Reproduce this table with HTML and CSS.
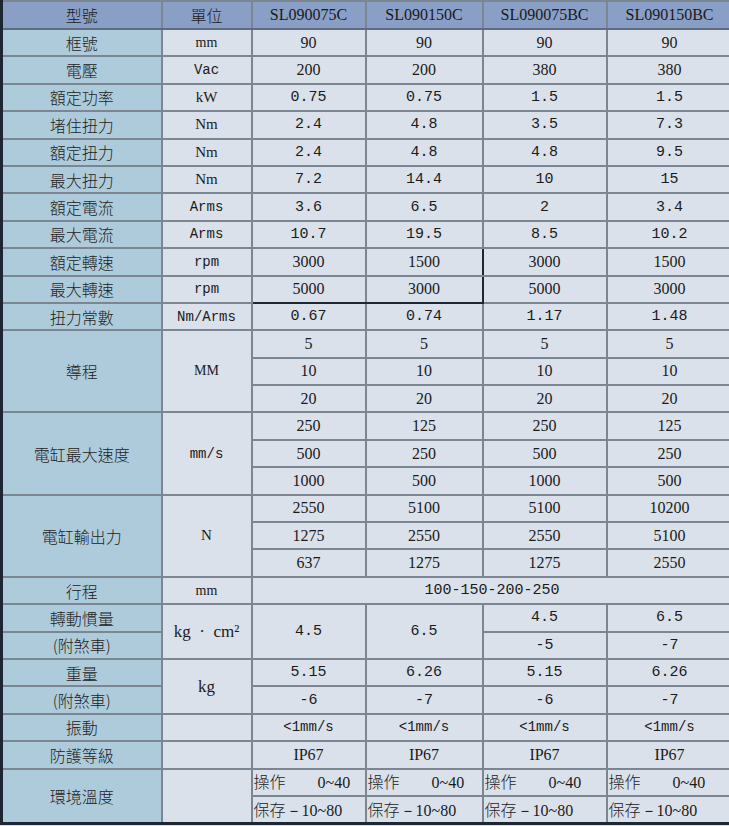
FILE: index.html
```html
<!DOCTYPE html>
<html lang="zh-Hant">
<head>
<meta charset="utf-8">
<title>規格表</title>
<link rel="stylesheet" href="styles.css">
</head>
<body>
<table class="spec">
  <colgroup>
    <col class="c1"><col class="c2"><col class="c3"><col class="c4"><col class="c5"><col class="c6">
  </colgroup>
  <thead>
    <tr class="head">
      <th class="zh">型號</th><th class="zh">單位</th>
      <th class="ser">SL090075C</th><th class="ser">SL090150C</th><th class="ser">SL090075BC</th><th class="ser">SL090150BC</th>
    </tr>
  </thead>
  <tbody>
    <tr><th>框號</th><td class="u ser sm">mm</td><td class="ser">90</td><td class="ser">90</td><td class="ser">90</td><td class="ser">90</td></tr>
    <tr><th>電壓</th><td class="u mono">Vac</td><td class="ser">200</td><td class="ser">200</td><td class="ser">380</td><td class="ser">380</td></tr>
    <tr><th>額定功率</th><td class="u ser">kW</td><td class="mono">0.75</td><td class="mono">0.75</td><td class="mono">1.5</td><td class="mono">1.5</td></tr>
    <tr><th>堵住扭力</th><td class="u ser">Nm</td><td class="mono">2.4</td><td class="mono">4.8</td><td class="mono">3.5</td><td class="mono">7.3</td></tr>
    <tr><th>額定扭力</th><td class="u ser">Nm</td><td class="mono">2.4</td><td class="mono">4.8</td><td class="mono">4.8</td><td class="mono">9.5</td></tr>
    <tr><th>最大扭力</th><td class="u ser">Nm</td><td class="mono">7.2</td><td class="mono">14.4</td><td class="mono">10</td><td class="mono">15</td></tr>
    <tr><th>額定電流</th><td class="u mono">Arms</td><td class="mono">3.6</td><td class="mono">6.5</td><td class="mono">2</td><td class="mono">3.4</td></tr>
    <tr><th>最大電流</th><td class="u mono">Arms</td><td class="mono">10.7</td><td class="mono">19.5</td><td class="mono">8.5</td><td class="mono">10.2</td></tr>
    <tr><th>額定轉速</th><td class="u mono">rpm</td><td class="ser box-tl">3000</td><td class="ser box-tr">1500</td><td class="ser">3000</td><td class="ser">1500</td></tr>
    <tr><th>最大轉速</th><td class="u mono">rpm</td><td class="ser box-bl">5000</td><td class="ser box-br">3000</td><td class="ser">5000</td><td class="ser">3000</td></tr>
    <tr><th>扭力常數</th><td class="u mono">Nm/Arms</td><td class="mono">0.67</td><td class="mono">0.74</td><td class="mono">1.17</td><td class="mono">1.48</td></tr>

    <tr><th rowspan="3">導程</th><td class="u ser sm" rowspan="3">MM</td><td class="ser">5</td><td class="ser">5</td><td class="ser">5</td><td class="ser">5</td></tr>
    <tr><td class="ser">10</td><td class="ser">10</td><td class="ser">10</td><td class="ser">10</td></tr>
    <tr><td class="ser">20</td><td class="ser">20</td><td class="ser">20</td><td class="ser">20</td></tr>

    <tr><th rowspan="3">電缸最大速度</th><td class="u mono" rowspan="3">mm/s</td><td class="ser">250</td><td class="ser">125</td><td class="ser">250</td><td class="ser">125</td></tr>
    <tr><td class="ser">500</td><td class="ser">250</td><td class="ser">500</td><td class="ser">250</td></tr>
    <tr><td class="ser">1000</td><td class="ser">500</td><td class="ser">1000</td><td class="ser">500</td></tr>

    <tr><th rowspan="3">電缸輸出力</th><td class="u ser" rowspan="3">N</td><td class="ser">2550</td><td class="ser">5100</td><td class="ser">5100</td><td class="ser">10200</td></tr>
    <tr><td class="ser">1275</td><td class="ser">2550</td><td class="ser">2550</td><td class="ser">5100</td></tr>
    <tr><td class="ser">637</td><td class="ser">1275</td><td class="ser">1275</td><td class="ser">2550</td></tr>

    <tr><th>行程</th><td class="u ser sm">mm</td><td class="mono" colspan="4">100-150-200-250</td></tr>

    <tr><th>轉動慣量</th><td class="u ser kgcm" rowspan="2">kg&nbsp;&nbsp;·&nbsp;&nbsp;cm²</td><td class="mono" rowspan="2">4.5</td><td class="mono" rowspan="2">6.5</td><td class="mono">4.5</td><td class="mono">6.5</td></tr>
    <tr><th>(附煞車)</th><td class="mono">-5</td><td class="mono">-7</td></tr>

    <tr><th>重量</th><td class="u ser kgcm" rowspan="2">kg</td><td class="mono">5.15</td><td class="mono">6.26</td><td class="mono">5.15</td><td class="mono">6.26</td></tr>
    <tr><th>(附煞車)</th><td class="mono">-6</td><td class="mono">-7</td><td class="mono">-6</td><td class="mono">-7</td></tr>

    <tr><th>振動</th><td class="u"></td><td class="mono vib">&lt;1mm/s</td><td class="mono vib">&lt;1mm/s</td><td class="mono vib">&lt;1mm/s</td><td class="mono vib">&lt;1mm/s</td></tr>
    <tr><th>防護等級</th><td class="u"></td><td class="ser">IP67</td><td class="ser">IP67</td><td class="ser">IP67</td><td class="ser">IP67</td></tr>

    <tr><th rowspan="2">環境溫度</th><td class="u" rowspan="2"></td>
      <td class="env"><span class="zh">操作</span><span class="ser gap">0~40</span></td>
      <td class="env"><span class="zh">操作</span><span class="ser gap">0~40</span></td>
      <td class="env"><span class="zh">操作</span><span class="ser gap">0~40</span></td>
      <td class="env"><span class="zh">操作</span><span class="ser gap">0~40</span></td></tr>
    <tr class="last">
      <td class="env"><span class="zh">保存</span><span class="ser">－10~80</span></td>
      <td class="env"><span class="zh">保存</span><span class="ser">－10~80</span></td>
      <td class="env"><span class="zh">保存</span><span class="ser">－10~80</span></td>
      <td class="env"><span class="zh">保存</span><span class="ser">－10~80</span></td></tr>
  </tbody>
</table>
</body>
</html>
```
FILE: styles.css
```css
html, body {
  margin: 0;
  padding: 0;
  background: #dae1ea;
}

.spec {
  border-collapse: collapse;
  table-layout: fixed;
  width: 731px;
  border-left: 3px solid #1c2733;
  border-top: 2px solid #1c2733;
  border-bottom: 3px solid #1c2733;
  color: #1a1a1a;
}

.c1 { width: 160px; }
.c2 { width: 90px; }
.c3 { width: 114px; }
.c4 { width: 117px; }
.c5 { width: 124px; }
.c6 { width: 126px; }

.spec th,
.spec td {
  border: 2px solid #7b8692;
  padding: 0;
  height: 25.4px;
  text-align: center;
  vertical-align: middle;
  font-weight: normal;
  white-space: nowrap;
  overflow: hidden;
  line-height: 1;
}

.spec tr.head th {
  background: #8a9fc6;
  height: 26px;
  border-bottom-color: #5e6c80;
}

.spec tr.head th.zh {
  font-weight: 300;
}

.spec tbody th {
  background: #aecbdb;
  font-family: "Noto Sans CJK TC", "Noto Sans CJK SC", sans-serif;
  font-size: 16px;
  font-weight: 300;
  color: #222;
}

.spec td {
  background: #dae1ea;
}

.zh {
  font-family: "Noto Sans CJK TC", "Noto Sans CJK SC", sans-serif;
  font-size: 16px;
  font-weight: 300;
}

.ser {
  font-family: "Liberation Serif", "Times New Roman", serif;
  font-size: 16px;
}

.mono {
  font-family: "Liberation Mono", "Courier New", monospace;
  font-size: 15px;
}

.u.mono { font-size: 14px; }
.u.ser { font-size: 15px; }
.u.sm { font-size: 14px; }
.u.kgcm { font-size: 17px; }

.vib { font-size: 14px; }

.spec .env {
  text-align: left;
  padding-left: 1px;
}
.env .zh { font-size: 16px; }
.env .ser { font-size: 16px; }
.env .gap { margin-left: 32px; }

.spec .box-tl { border-top: 2px solid #1c2733; border-left: 2px solid #1c2733; }
.spec .box-tr { border-top: 2px solid #1c2733; border-right: 2px solid #1c2733; }
.spec .box-bl { border-bottom: 2px solid #1c2733; border-left: 2px solid #1c2733; }
.spec .box-br { border-bottom: 2px solid #1c2733; border-right: 2px solid #1c2733; }
```
